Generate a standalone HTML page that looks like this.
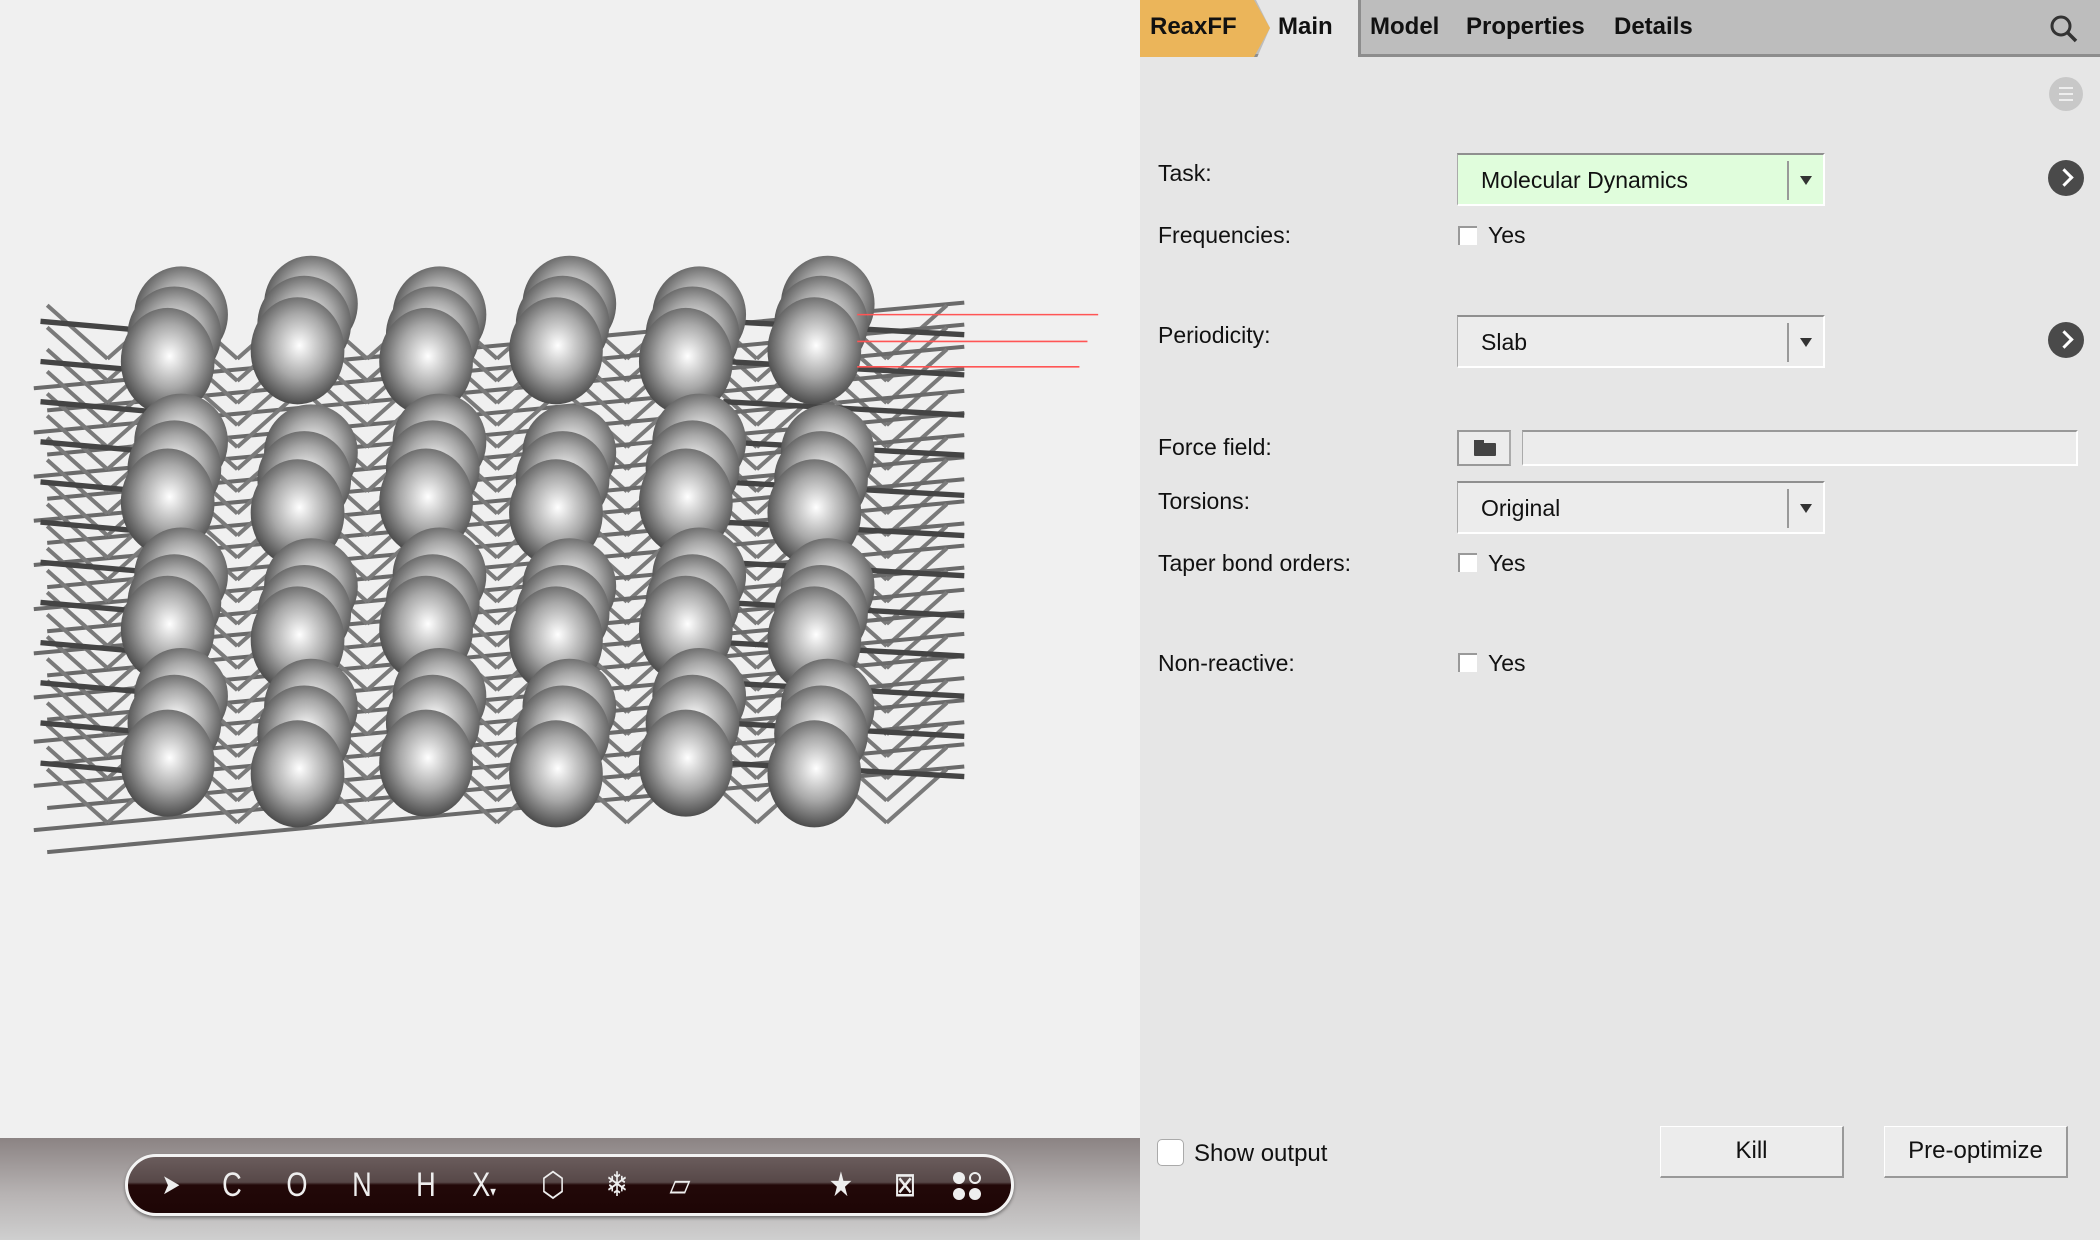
<!DOCTYPE html>
<html><head><meta charset="utf-8"><style>
*{box-sizing:border-box;margin:0;padding:0}
body{width:2100px;height:1240px;overflow:hidden;font-family:"Liberation Sans",sans-serif;background:#e6e6e6;position:relative;color:#111}
#left{position:absolute;left:0;top:0;width:1140px;height:1240px;background:#f0f0f0}
#band{position:absolute;left:0;top:1138px;width:1140px;height:102px;background:linear-gradient(#8b8383,#b7b3b3 55%,#cfcfcf)}
#pill{position:absolute;left:125px;top:1154px;width:889px;height:62px;border-radius:31px;border:3px solid #f4f4f4;background:linear-gradient(#6a5c5c,#574848 45%,#220808 50%,#1e0606);box-shadow:0 2px 3px rgba(0,0,0,.4)}
#pill span{position:absolute;top:10px;color:#eee;font-size:34px;line-height:36px;transform:translateX(-50%) scaleX(.8)}
#right{position:absolute;left:1140px;top:0;width:960px;height:1240px}
#topbar{position:absolute;left:0;top:0;width:960px;height:57px;background:#bdbdbd;border-bottom:3px solid #8d8d8d}
#reax{position:absolute;left:0;top:0;width:130px;height:57px;background:#ebb55a;clip-path:polygon(0 0,114px 0,130px 28px,114px 57px,0 57px)}
#main{position:absolute;left:116px;top:0;width:104px;height:60px;background:#e6e6e6;clip-path:polygon(0 0,104px 0,104px 60px,0 60px,14px 28px)}
#mainb{position:absolute;left:218px;top:0;width:3px;height:57px;background:#8d8d8d}
.tab{position:absolute;top:13px;font-weight:bold;font-size:24px}
.lbl{position:absolute;left:18px;font-size:23px}
.dd{position:absolute;left:317px;width:368px;height:53px;background:#ececec;border:1px solid #aaa;border-top:2px solid #8f8f8f;border-bottom:2px solid #fff;border-right:2px solid #fff}
.dd span{position:absolute;left:23px;top:12px;font-size:23px}
.dd i{position:absolute;right:34px;top:6px;width:2px;height:39px;background:#999}
.dd b{position:absolute;right:11px;top:21px;width:0;height:0;border-left:6px solid transparent;border-right:6px solid transparent;border-top:9px solid #333}
.cb{position:absolute;left:318px;width:19px;height:19px;background:#fff;border-left:2px solid #999;border-top:2px solid #999}
.yes{position:absolute;left:348px;font-size:23px}
.circ{position:absolute;left:908px;width:36px;height:36px;border-radius:50%;background:#4a4a4a}
.circ:after{content:"";position:absolute;left:10px;top:11px;width:10px;height:10px;border-right:3px solid #fff;border-top:3px solid #fff;transform:rotate(45deg)}
.btn{position:absolute;top:1126px;height:52px;background:#ececec;border:1px solid #fff;border-right:2px solid #999;border-bottom:2px solid #999;font-size:24px;text-align:center;line-height:48px}
</style></head><body>
<div id="left">
<svg width="1140" height="1138" viewBox="0 0 851 850" id="mol">
<defs><radialGradient id="g" cx="0.52" cy="0.45" r="0.6"><stop offset="0" stop-color="#fff"/><stop offset="0.5" stop-color="#a8a8a8"/><stop offset="1" stop-color="#3a3a3a"/></radialGradient></defs>
<g id="lines" stroke="#6a6a6a" stroke-width="3" fill="none"></g>
<g id="sph"></g>
<g stroke="#ff5555" stroke-width="1.2"><line x1="640" y1="235" x2="820" y2="235"/><line x1="640" y1="255" x2="812" y2="255"/><line x1="640" y1="274" x2="806" y2="274"/></g>
</svg>
</div>
<div id="band"></div>
<div id="pill">
<span style="left:43px;font-size:28px">➤</span>
<span style="left:104px">C</span><span style="left:169px">O</span><span style="left:234px">N</span><span style="left:298px">H</span><span style="left:356px">X<small style="font-size:14px">▾</small></span>
<span style="left:425px">⬡</span><span style="left:489px">❄</span><span style="left:552px">▱</span>
<span style="left:713px">★</span><span style="left:777px">⊠</span>
<svg style="position:absolute;left:822px;top:12px" width="34" height="34"><g fill="#eee"><circle cx="9" cy="9" r="6"/><circle cx="25" cy="9" r="5" fill="none" stroke="#eee" stroke-width="2"/><circle cx="9" cy="25" r="6"/><circle cx="25" cy="25" r="6"/></g></svg>
</div>
<div id="right">
<div id="topbar"></div>
<div id="main"></div><div id="mainb"></div>
<div id="reax"></div>
<div class="tab" style="left:10px">ReaxFF</div>
<div class="tab" style="left:138px">Main</div>
<div class="tab" style="left:230px">Model</div>
<div class="tab" style="left:326px">Properties</div>
<div class="tab" style="left:474px">Details</div>
<svg style="position:absolute;left:908px;top:13px" width="32" height="32"><circle cx="13" cy="13" r="9" stroke="#333" stroke-width="3" fill="none"/><line x1="20" y1="20" x2="28" y2="28" stroke="#333" stroke-width="3.5"/></svg>
<div style="position:absolute;left:909px;top:77px;width:34px;height:34px;border-radius:50%;background:#c8c8c8"><div style="position:absolute;left:10px;top:10px;width:14px;height:14px;border-top:2px solid #eee;border-bottom:2px solid #eee"></div><div style="position:absolute;left:10px;top:16px;width:14px;height:2px;background:#eee"></div></div>
<div class="lbl" style="top:160px">Task:</div>
<div class="dd" style="top:153px;background:#e0fddc"><span>Molecular Dynamics</span><i></i><b></b></div>
<div class="circ" style="top:160px"></div>
<div class="lbl" style="top:222px">Frequencies:</div>
<div class="cb" style="top:226px"></div><div class="yes" style="top:222px">Yes</div>
<div class="lbl" style="top:322px">Periodicity:</div>
<div class="dd" style="top:315px"><span>Slab</span><i></i><b></b></div>
<div class="circ" style="top:322px"></div>
<div class="lbl" style="top:434px">Force field:</div>
<div style="position:absolute;left:317px;top:430px;width:54px;height:36px;background:#ececec;border:2px solid #999;border-right-color:#aaa"><div style="position:absolute;left:15px;top:11px;width:22px;height:13px;background:#444;border-radius:1px"></div><div style="position:absolute;left:15px;top:8px;width:10px;height:4px;background:#444"></div></div>
<div style="position:absolute;left:382px;top:430px;width:556px;height:36px;background:#ececec;border-top:2px solid #999;border-left:1px solid #aaa;border-bottom:2px solid #fff;border-right:2px solid #fff"></div>
<div class="lbl" style="top:488px">Torsions:</div>
<div class="dd" style="top:481px"><span>Original</span><i></i><b></b></div>
<div class="lbl" style="top:550px">Taper bond orders:</div>
<div class="cb" style="top:553px"></div><div class="yes" style="top:550px">Yes</div>
<div class="lbl" style="top:650px">Non-reactive:</div>
<div class="cb" style="top:653px"></div><div class="yes" style="top:650px">Yes</div>
<div style="position:absolute;left:17px;top:1139px;width:27px;height:27px;border-radius:5px;background:#fff;border:1px solid #aaa"></div>
<div style="position:absolute;left:54px;top:1140px;font-size:24px">Show output</div>
<div class="btn" style="left:520px;width:184px">Kill</div>
<div class="btn" style="left:744px;width:184px">Pre-optimize</div>
</div>
<script>
var L=document.getElementById('lines'),S=document.getElementById('sph'),ns='http://www.w3.org/2000/svg';
function ln(a,b,c,d,col,w){var e=document.createElementNS(ns,'line');e.setAttribute('x1',a);e.setAttribute('y1',b);e.setAttribute('x2',c);e.setAttribute('y2',d);if(col)e.setAttribute('stroke',col);if(w)e.setAttribute('stroke-width',w);L.appendChild(e);}
for(var r=0;r<22;r++){var y=228+r*16.5;
 ln(25+(r%2)*10,y+62,720,y-2);
 for(var c=0;c<7;c++){var x=35+c*97;ln(x,y,x+45,y+40,'#7a7a7a');ln(x+45,y+40,x+90,y,'#7a7a7a');}
}
for(var r=0;r<12;r++){var y=240+r*30;ln(30,y,120,y+8,'#444',4);ln(540,y,720,y+10,'#444',4);}
var cols=[125,222,318,415,512,608];
function sp(x,y,rx,ry){var e=document.createElementNS(ns,'ellipse');e.setAttribute('cx',x);e.setAttribute('cy',y);e.setAttribute('rx',rx);e.setAttribute('ry',ry);e.setAttribute('fill','url(#g)');S.appendChild(e);}
var rows=[[235,250,270],[330,350,375],[430,450,470],[520,540,570]];
for(var i=0;i<4;i++){for(var k=0;k<3;k++){for(var j=0;j<6;j++){var x=cols[j]+(2-k)*5;var yy=rows[i][k]+((j%2)?(i==0?-8:8):0);sp(x,yy,35,k==2?40:36);}}}
</script>
</body></html>
